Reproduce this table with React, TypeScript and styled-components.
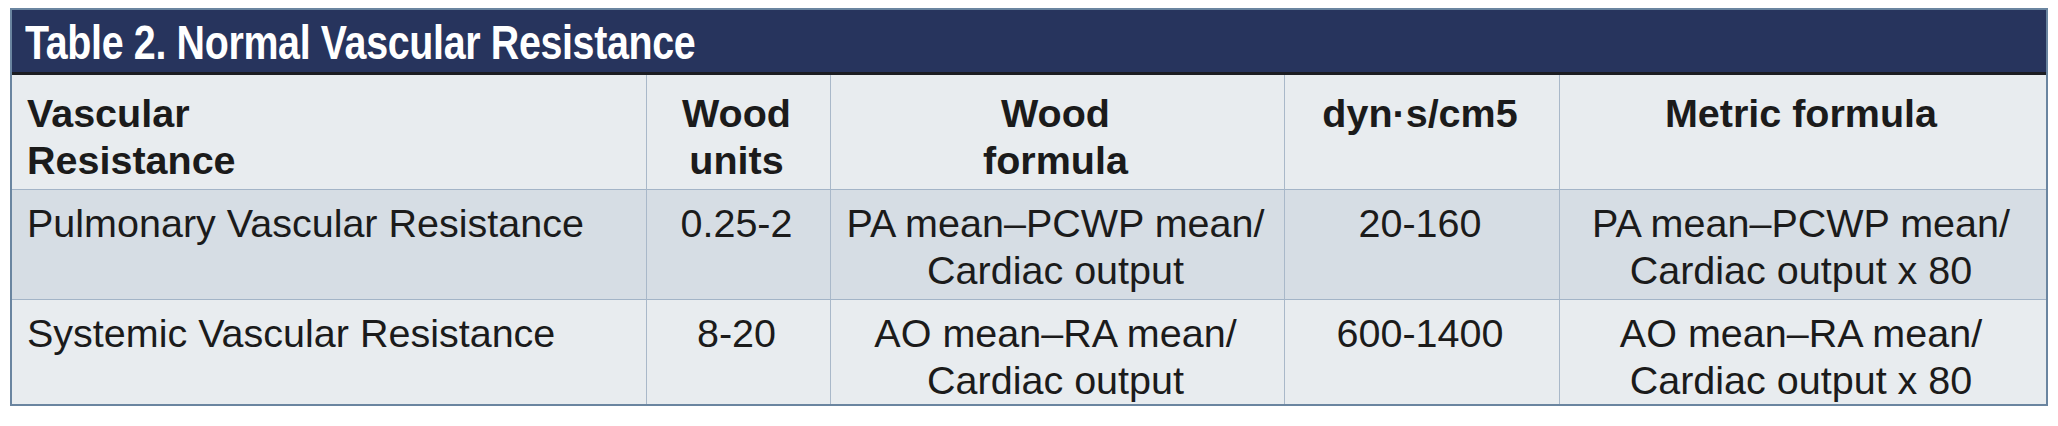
import React from 'react';
import styled, { createGlobalStyle } from 'styled-components';

const GlobalStyle = createGlobalStyle`
  body {
    margin: 0;
    background: #ffffff;
    font-family: 'Liberation Sans', Arial, sans-serif;
  }
`;

const Page = styled.div`
  padding: 8px 0 0 10px;
`;

const TableBox = styled.div`
  width: 2034px;
  border: 2px solid #6a85a0;
  background: #e8ecef;
`;

const TitleBar = styled.div`
  height: 65px;
  background: #27345d;
  border-bottom: 3px solid #1c1d22;
  display: flex;
  align-items: center;
  padding: 3px 0 0 13px;
  box-sizing: border-box;
  overflow: hidden;
`;

const Title = styled.h2`
  margin: 0;
  display: inline-block;
  color: #ffffff;
  font-family: 'Liberation Sans', Arial, sans-serif;
  font-weight: 700;
  font-size: 48px;
  line-height: 1;
  letter-spacing: -0.4px;
  white-space: nowrap;
  transform: scaleX(0.82);
  transform-origin: left center;
`;

const Grid = styled.div`
  display: grid;
  grid-template-columns: 634px 184px 454px 275px 487px;
  grid-template-rows: 114px 110px 105px;
`;

const Cell = styled.div<{ $head?: boolean; $first?: boolean; $top?: boolean; $shade?: boolean }>`
  box-sizing: border-box;
  background: ${(p) => (p.$shade ? '#d6dde4' : '#e8ecef')};
  border-left: ${(p) => (p.$first ? 'none' : '1px solid #a9b8c9')};
  border-top: ${(p) => (p.$top ? 'none' : '1px solid #a3b4c7')};
  padding: ${(p) => (p.$head ? '15px' : '10px')} 14px 0 ${(p) => (p.$first ? '15px' : '10px')};
  text-align: ${(p) => (p.$first ? 'left' : 'center')};
  color: #1b1b1b;
  font-family: 'Liberation Sans', Arial, sans-serif;
  font-size: 39.5px;
  line-height: 47px;
  font-weight: ${(p) => (p.$head ? 700 : 400)};
  white-space: pre-line;
`;

const headers = [
  'Vascular\nResistance',
  'Wood\nunits',
  'Wood\nformula',
  'dyn·s/cm5',
  'Metric formula',
];

const rows = [
  [
    'Pulmonary Vascular Resistance',
    '0.25-2',
    'PA mean–PCWP mean/\nCardiac output',
    '20-160',
    'PA mean–PCWP mean/\nCardiac output x 80',
  ],
  [
    'Systemic Vascular Resistance',
    '8-20',
    'AO mean–RA mean/\nCardiac output',
    '600-1400',
    'AO mean–RA mean/\nCardiac output x 80',
  ],
];

function App() {
  return (
    <>
      <GlobalStyle />
      <Page>
        <TableBox>
          <TitleBar>
            <Title>Table 2. Normal Vascular Resistance</Title>
          </TitleBar>
          <Grid>
            {headers.map((h, i) => (
              <Cell key={h} $head $top $first={i === 0}>
                {h}
              </Cell>
            ))}
            {rows.map((row, r) =>
              row.map((text, i) => (
                <Cell key={`${r}-${i}`} $first={i === 0} $shade={r === 0}>
                  {text}
                </Cell>
              ))
            )}
          </Grid>
        </TableBox>
      </Page>
    </>
  );
}

export default App;
